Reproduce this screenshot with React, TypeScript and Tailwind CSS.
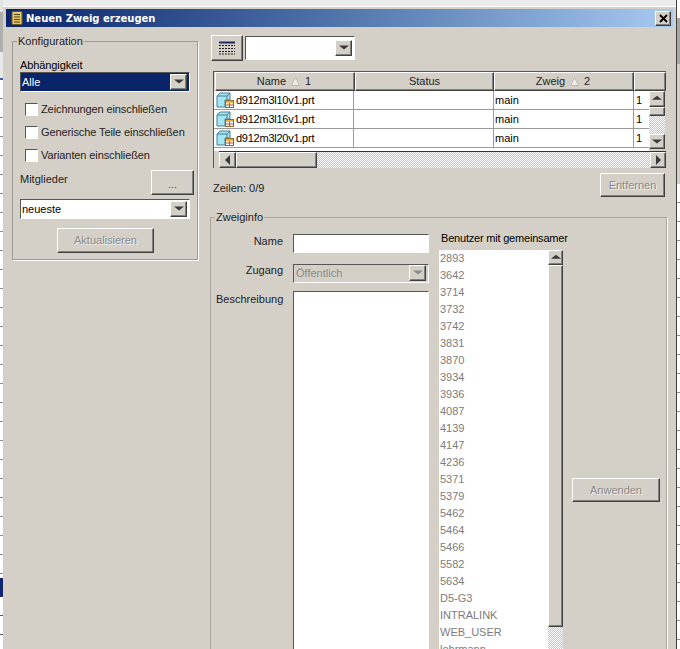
const raised = 'border border-t-white border-l-white border-r-[#404040] border-b-[#404040] bg-[#d4d0c8] shadow-[inset_-1px_-1px_0_#808080]'
const sunken = 'border border-t-[#555555] border-l-[#555555] border-r-white border-b-white'
const dither = 'bg-[repeating-conic-gradient(#ffffff_0_25%,#c8c4bc_0_50%)] bg-[length:2px_2px]'
const disabledText = 'text-[#8a8a8a] [text-shadow:1px_1px_0_#eeeeee]'

const users = ['2893', '3642', '3714', '3732', '3742', '3831', '3870', '3934', '3936', '4087', '4139', '4147', '4236', '5371', '5379', '5462', '5464', '5466', '5582', '5634', 'D5-G3', 'INTRALINK', 'WEB_USER', 'lohrmann']
const files = ['d912m3l10v1.prt', 'd912m3l16v1.prt', 'd912m3l20v1.prt']
const options = ['Zeichnungen einschließen', 'Generische Teile einschließen', 'Varianten einschließen']

function Arrow({ dir, color = '#3a3a3a' }: { dir: 'up' | 'down' | 'left' | 'right'; color?: string }) {
  const points = { up: '0,6 5,1 10,6', down: '0,2 10,2 5,7', left: '7,0 7,10 2,5', right: '3,0 3,10 8,5' }[dir]
  return (
    <svg width="10" height="10" viewBox="0 0 10 10" className={dir === 'up' || dir === 'down' ? 'h-2 w-2.5' : 'h-2.5 w-2.5'} preserveAspectRatio="none">
      <polygon points={points} fill={color} />
    </svg>
  )
}

function ScrollButton({ dir, className = 'h-4 w-4', color }: { dir: 'up' | 'down' | 'left' | 'right'; className?: string; color?: string }) {
  return (
    <div className={`${raised} ${className} flex shrink-0 items-center justify-center`}>
      <Arrow dir={dir} color={color} />
    </div>
  )
}

function Combo({ text, className, fill = 'bg-white', textColor = 'text-black', arrow, pad = 'pl-[1px]' }: { text: string; className: string; fill?: string; textColor?: string; arrow?: string; pad?: string }) {
  return (
    <div className={`${sunken} ${fill} ${textColor} ${className} ${pad} flex items-center justify-between pr-[2px]`}>
      <span className="pt-[1px]">{text}</span>
      <ScrollButton dir="down" className="h-[16px] w-[17px]" color={arrow} />
    </div>
  )
}

function NotesIcon() {
  return (
    <svg width="12" height="14" viewBox="0 0 12 14">
      <rect x="1" y="0.5" width="10" height="13" rx="1" fill="#e8c860" stroke="#6b5a20" />
      <path d="M3 3.5h6M3 6h6M3 8.5h6M3 11h6" stroke="#4a3f18" strokeWidth="1" />
    </svg>
  )
}

function GridIcon() {
  return (
    <svg width="16" height="14" viewBox="0 0 16 14">
      <path d="M0 1.5h16" stroke="#1c2a60" strokeWidth="2" />
      <path d="M0 4.5h16M0 7.5h16M0 10.5h16M0 13h16" stroke="#222" strokeWidth="1" strokeDasharray="2 1" />
    </svg>
  )
}

function FileIcon() {
  return (
    <svg width="18" height="16" viewBox="0 0 18 16" className="shrink-0">
      <path d="M1 4 L4 1 H14 V8 H9 V15 H1 Z" fill="#a4e6f2" stroke="#4a7c9a" />
      <path d="M1 4 H11 L14 1 M11 4 V8" fill="none" stroke="#4a7c9a" />
      <rect x="9.5" y="8.5" width="8" height="7" fill="#fff" stroke="#8a6a30" />
      <rect x="10" y="9" width="7" height="2" fill="#f0b040" />
      <path d="M9.5 13h8M13.5 11v4" stroke="#c05030" />
    </svg>
  )
}

function Header({ label, order, className }: { label: string; order?: string; className: string }) {
  return (
    <div className={`${raised} ${className} ${order ? 'gap-[5px] pr-[2px]' : ''} flex h-[19px] shrink-0 items-center justify-center text-[#222]`}>
      <span>{label}</span>
      {order && (
        <>
          <svg width="9" height="9" viewBox="0 0 9 9">
            <polygon points="4.5,0.5 8.5,8.5 0.5,8.5" fill="#eeece6" stroke="#bdb9b0" />
          </svg>
          <span>{order}</span>
        </>
      )}
    </div>
  )
}

export default function App() {
  return (
    <div className="flex h-[649px] w-[680px] overflow-hidden bg-[#d4d0c8] font-['Liberation_Sans',Arial,sans-serif] text-[11px] leading-[13px] text-[#222]">
      {/* window behind, left edge */}
      <div className="flex w-[3px] shrink-0 flex-col bg-white">
        <div className="h-[12px] bg-[#e4e4e4]" />
        <div className="h-[40px] bg-[#b0aeaa]" />
        <div className="h-[26px] bg-[#e8e8e8]" />
        <div className="h-[2px] bg-[#4060a0]" />
        <div className="h-[498px] bg-[repeating-linear-gradient(#ffffff_0_18px,#8a8a8a_18px_19px)]" />
        <div className="h-[19px] bg-[#14246e]" />
        <div className="h-[52px] bg-[repeating-linear-gradient(#ffffff_0_18px,#555555_18px_19px)]" />
      </div>

      <div className="flex w-[673px] shrink-0 flex-col">
        <div className="h-[6px] shrink-0 bg-[#ececec]" />
        <div className="h-[3px] shrink-0 border-t border-white bg-[#d4d0c8]" />
        {/* title bar */}
        <div className="mx-[3px] flex h-[18px] shrink-0 items-center bg-gradient-to-r from-[#0a246a] to-[#a6caf0] pl-[5px] pr-[2px]">
          <NotesIcon />
          <span className="ml-[3px] font-['DejaVu_Sans',sans-serif] text-[10px] font-bold text-white">Neuen Zweig erzeugen</span>
          <div className={`${raised} ml-auto flex h-[15px] w-[16px] items-center justify-center`}>
            <svg width="9" height="9" viewBox="0 0 9 9">
              <path d="M1 1l7 7M8 1l-7 7" stroke="#000" strokeWidth="1.8" />
            </svg>
          </div>
        </div>

        <div className="flex min-h-0 flex-1">
          {/* left column */}
          <div className="ml-[9px] mt-[8px] w-[186px] shrink-0">
            <fieldset className="h-[225px] border border-[#9c9a94] pl-[7px] pr-[3px] shadow-[1px_1px_0_#ffffff]">
              <legend className="ml-[-3px] px-[1px] text-[#222]">Konfiguration</legend>
              <div className="mt-[11px] h-[13px] tracking-[-0.1px] text-black">Abhängigkeit</div>
              <Combo text="Alle" className="h-[20px] w-[170px]" fill="bg-[#0a246a]" textColor="text-white" />
              <div className="mt-[11px] flex flex-col gap-[10px] tracking-[-0.1px]">
                {options.map((o) => (
                  <label key={o} className="flex h-[13px] items-center pl-[5px]">
                    <span className={`${sunken} h-[13px] w-[13px] bg-white`} />
                    <span className="ml-[3px]">{o}</span>
                  </label>
                ))}
              </div>
              <div className="mt-[8px] flex items-center justify-between">
                <span className="pb-[6px]">Mitglieder</span>
                <button className={`${raised} h-[25px] w-[43px] pt-[4px] text-[#555]`}>...</button>
              </div>
              <Combo text="neueste" className="mt-[4px] h-[20px] w-[170px]" />
              <div className="mt-[9px] flex pl-[37px]">
                <button className={`${raised} ${disabledText} h-[25px] w-[97px]`}>Aktualisieren</button>
              </div>
            </fieldset>
          </div>

          {/* right column */}
          <div className="ml-[12px] flex w-[457px] shrink-0 flex-col">
            <div className="ml-[1px] mt-[8px] flex h-[26px] shrink-0 items-center">
              <button className={`${raised} flex h-[26px] w-[32px] items-center justify-center`}>
                <GridIcon />
              </button>
              <Combo text="" className="ml-[2px] h-[24px] w-[110px]" />
            </div>

            {/* table */}
            <div className="ml-[3px] mt-[10px] h-[97px] w-[453px] shrink-0 border-l border-t border-[#555555]">
              <div className="flex w-[452px] pl-[1px]">
                <Header label="Name" order="1" className="w-[140px]" />
                <Header label="Status" className="w-[139px]" />
                <Header label="Zweig" order="2" className="w-[140px]" />
                <div className={`${raised} h-[19px] w-[32px] shrink-0`} />
              </div>
              <div className="flex h-[60px]">
                <div className="w-[435px] shrink-0 bg-white">
                  {files.map((f) => (
                    <div key={f} className="flex h-[19px] border-b border-[#9a9a9a] text-black">
                      <div className="flex w-[140px] items-center border-r border-[#9a9a9a] pl-[2px]">
                        <FileIcon />
                        <span className="ml-[2px] tracking-[-0.25px]">{f}</span>
                      </div>
                      <div className="w-[140px] border-r border-[#9a9a9a]" />
                      <div className="flex w-[140px] items-center border-r border-[#9a9a9a] pl-[1px]">main</div>
                      <div className="flex items-center pl-[2px]">1</div>
                    </div>
                  ))}
                </div>
                <div className="flex h-[58px] w-[16px] shrink-0 flex-col">
                  <ScrollButton dir="up" className="h-[16px] w-[16px]" />
                  <div className={`${raised} h-[9px] w-[16px]`} />
                  <div className={`${dither} min-h-0 flex-1`} />
                  <ScrollButton dir="down" className="h-[15px] w-[16px]" />
                </div>
              </div>
              <div className="ml-[5px] flex h-[17px] border-t border-[#333333]">
                <ScrollButton dir="left" className="h-[16px] w-[17px]" />
                <div className={`${raised} h-[16px] w-[81px]`} />
                <div className={`${dither} h-[16px] flex-1`} />
                <ScrollButton dir="right" className="h-[16px] w-[16px]" />
              </div>
            </div>

            <div className="mt-[5px] flex h-[24px] shrink-0 items-end justify-between">
              <span className="mb-[2px] ml-[3px]">Zeilen: 0/9</span>
              <button className={`${raised} ${disabledText} mr-[2px] h-[24px] w-[65px]`}>Entfernen</button>
            </div>

            {/* Zweiginfo */}
            <fieldset className="mt-[14px] h-[480px] shrink-0 border border-[#a8a6a0] shadow-[1px_1px_0_#ffffff]">
              <legend className="ml-[4px] px-[1px]">Zweiginfo</legend>
              <div className="flex">
                <div className="w-[219px] shrink-0 pt-[10px]">
                  <div className="flex h-[19px] items-center">
                    <span className="w-[72px] pb-[4px] text-right">Name</span>
                    <div className={`${sunken} ml-[10px] h-[19px] w-[136px] bg-white`} />
                  </div>
                  <div className="mt-[11px] flex h-[18px] items-center">
                    <span className="w-[72px] pb-[5px] text-right">Zugang</span>
                    <Combo text="Öffentlich" className="ml-[10px] h-[19px] w-[136px]" fill="bg-[#d4d0c8]" textColor="text-[#8a8a8a]" arrow="#8a8a8a" pad="pl-[2px]" />
                  </div>
                  <div className="mt-[9px] flex">
                    <span className="ml-[5px] w-[67px] pt-[2px]">Beschreibung</span>
                    <div className={`${sunken} ml-[10px] h-[400px] w-[136px] bg-white`} />
                  </div>
                </div>
                <div className="ml-[9px] w-[124px] shrink-0 pt-[8px]">
                  <div className="ml-[2px] h-[18px] whitespace-nowrap tracking-[-0.2px] text-black">Benutzer mit gemeinsamer</div>
                  <div className="flex">
                    <div className="h-[400px] w-[109px] shrink-0 bg-white pl-[1px] text-[#7c7c7c]">
                      {users.map((u) => (
                        <div key={u} className="flex h-[17px] items-center">{u}</div>
                      ))}
                    </div>
                    <div className="flex w-[15px] shrink-0 flex-col">
                      <ScrollButton dir="up" className="h-[15px] w-[15px]" />
                      <div className={`${raised} h-[362px] w-[15px]`} />
                      <div className={`${dither} flex-1`} />
                    </div>
                  </div>
                </div>
                <div className="ml-[9px] shrink-0 pt-[254px]">
                  <button className={`${raised} ${disabledText} h-[24px] w-[88px]`}>Anwenden</button>
                </div>
              </div>
            </fieldset>
          </div>
        </div>
      </div>

      {/* window behind, right edge */}
      <div className="flex w-[4px] shrink-0 flex-col border-l border-[#404040]">
        <div className="h-[18px] bg-white" />
        <div className="h-[46px] bg-[#a8a6a0]" />
        <div className="h-[120px] bg-[#d4d0c8]" />
        <div className="flex-1 bg-[repeating-linear-gradient(#ffffff_0_18px,#8a8a8a_18px_19px)]" />
      </div>
    </div>
  )
}
